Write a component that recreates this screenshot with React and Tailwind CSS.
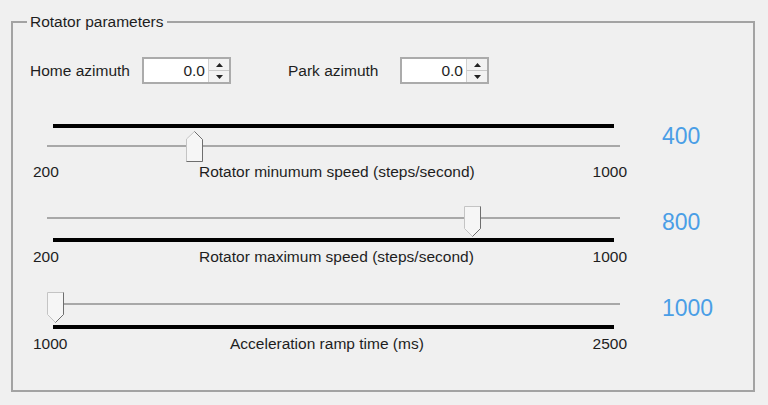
const SLIDERS = [
  {
    id: "min",
    min: 200,
    max: 1000,
    value: 400,
    label: "Rotator minumum speed (steps/second)",
    ticks: "top",
    gap: "w-[166px]",
    top: "mt-[40px]",
  },
  {
    id: "max",
    min: 200,
    max: 1000,
    value: 800,
    label: "Rotator maximum speed (steps/second)",
    ticks: "bottom",
    gap: "w-[166px]",
    top: "mt-[25px]",
  },
  {
    id: "ramp",
    min: 1000,
    max: 2500,
    value: 1000,
    label: "Acceleration ramp time (ms)",
    ticks: "bottom",
    gap: "w-[197px]",
    top: "mt-[26px]",
  },
];

function Thumb({ up, left }) {
  return (
    <svg
      width="17"
      height="31"
      viewBox="0 0 17 31"
      className="absolute top-0"
      style={{ left }}
    >
      {up ? (
        <>
          <polygon points="0.5,8 8.5,0.5 16.5,8.5 16.5,30.5 0.5,30.5" fill="#f6f6f6" stroke="#c4c4c4" />
          <polyline points="8.5,0.5 16.5,8.5 16.5,30.5 0.5,30.5" fill="none" stroke="#6e6e6e" />
        </>
      ) : (
        <>
          <polygon points="0.5,0.5 16.5,0.5 16.5,22.5 8.5,30.5 0.5,22.5" fill="#f6f6f6" stroke="#c4c4c4" />
          <polyline points="16.5,0.5 16.5,22.5 8.5,30.5" fill="none" stroke="#6e6e6e" />
        </>
      )}
    </svg>
  );
}

function Slider({ s }) {
  const frac = (s.value - s.min) / (s.max - s.min);
  const left = -0.5 + frac * 557;
  const up = s.ticks === "top";

  return (
    <div className={`flex items-start ${s.top}`}>
      <div className="ml-[20px] w-[594px] flex flex-col">
        {up ? (
          <div className="relative ml-[14px] w-[573px] h-[38px]">
            <div className="ml-[6px] w-[561px] h-[4px] bg-black" />
            <div className="mt-[17px] h-[2px] bg-[#a8a8a8]" />
            <div className="absolute inset-x-0 top-[7px]">
              <Thumb up left={left} />
            </div>
          </div>
        ) : (
          <div className="relative ml-[14px] w-[573px] h-[36px]">
            <div className={`${s.id === "ramp" ? "mt-[11px]" : "mt-[11px]"} h-[2px] bg-[#a8a8a8]`} />
            <div className={`${s.id === "ramp" ? "mt-[20px]" : "mt-[19px]"} ml-[6px] w-[561px] h-[4px] bg-black`} />
            <Thumb left={left} />
          </div>
        )}
        <div className={`flex leading-[18px] ${up ? "mt-[1px]" : s.id === "ramp" ? "mt-[7px]" : "mt-[6px]"}`}>
          <span className={s.gap}>{s.min}</span>
          <span>{s.label}</span>
          <span className="ml-auto">{s.max}</span>
        </div>
      </div>
      <div
        className={`ml-[35px] text-[23px] leading-[28px] text-[#4a9ee6] ${
          up ? "mt-[-2px]" : "mt-[2px]"
        }`}
      >
        {s.value}
      </div>
    </div>
  );
}

function SpinBox({ value }) {
  return (
    <div className="flex w-[89px] h-[27px] border-2 border-[#ababab] bg-white">
      <div className="flex-1 text-right pr-[3px] leading-[23px]">{value}</div>
      <div className="w-[21px] flex flex-col border-l border-[#d0d0d0]">
        <div className="flex-1 flex items-center justify-center bg-[#f2f2f2] border-b border-[#c8c8c8]">
          <svg width="7" height="4" viewBox="0 0 7 4">
            <polygon points="0,4 3.5,0 7,4" fill="#222" />
          </svg>
        </div>
        <div className="flex-1 flex items-center justify-center bg-[#f2f2f2]">
          <svg width="7" height="4" viewBox="0 0 7 4">
            <polygon points="0,0 7,0 3.5,4" fill="#222" />
          </svg>
        </div>
      </div>
    </div>
  );
}

export default function App() {
  return (
    <div className="w-[768px] h-[405px] bg-[#f0f0f0] pt-[13px] pl-[11px] text-[15.5px] text-[#1e1e1e] font-['Liberation_Sans',Arial,sans-serif] overflow-hidden">
      <fieldset className="w-[744px] h-[379px] border-2 border-[#a3a3a3]">
        <legend className="ml-[14px] px-[3px] leading-[18px]">Rotator parameters</legend>

        {/* azimuth row */}
        <div className="flex items-center mt-[26px] pl-[17px]">
          <span className="w-[112px]">Home azimuth</span>
          <SpinBox value="0.0" />
          <span className="ml-[57px] w-[112px]">Park azimuth</span>
          <SpinBox value="0.0" />
        </div>

        {SLIDERS.map((s) => (
          <Slider key={s.id} s={s} />
        ))}
      </fieldset>
    </div>
  );
}
